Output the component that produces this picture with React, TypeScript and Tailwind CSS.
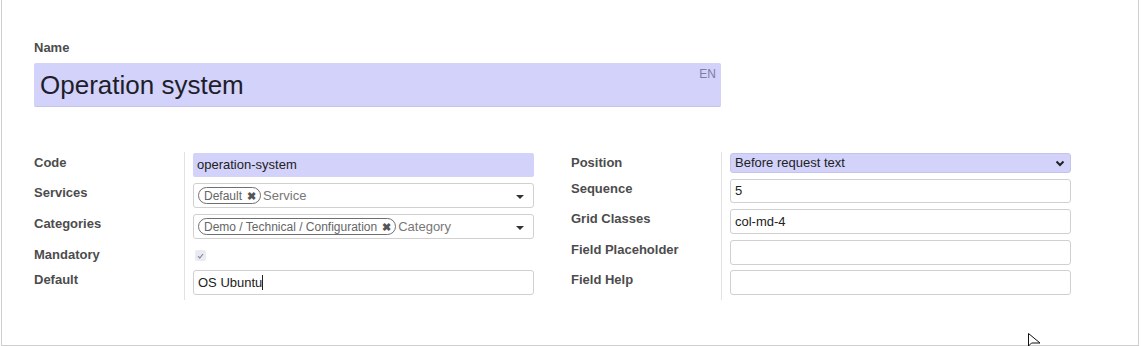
import React from "react";

const font = { fontFamily: '"Liberation Sans", Arial, sans-serif' };

const Label = ({ children, pt = "pt-[1px]" }: { children: React.ReactNode; pt?: string }) => (
  <div className={`w-[150px] shrink-0 text-[13px] leading-[18px] font-bold text-[#4c4c4c] ${pt}`}>{children}</div>
);

const Tag = ({ text }: { text: string }) => (
  <span className="inline-flex items-center h-[17px] pl-[5px] pr-[4px] rounded-full border-[1.5px] border-[#6f6f6f] text-[12px] leading-[14px] text-[#666] mr-[2px]">
    {text}
    <span className="ml-[5px] text-[11px] font-bold text-[#555]">✖</span>
  </span>
);

const Caret = () => (
  <span className="ml-auto mr-[9px] w-0 h-0 border-l-[4px] border-r-[4px] border-t-[4px] border-l-transparent border-r-transparent border-t-[#333] mt-[3px]" />
);

const TextBox = ({ value, h = "h-[25px]", mt = "mt-0", cursor }: { value?: string; h?: string; mt?: string; cursor?: boolean }) => (
  <div className={`w-[341px] ${h} ${mt} border border-[#d0d0d0] rounded-[3px] bg-white flex items-center px-[4px] text-[13px] text-[#222]`}>
    {value}
    {cursor && <span className="inline-block w-[1px] h-[15px] bg-[#222]" />}
  </div>
);

const Row = ({ h, children }: { h: string; children: React.ReactNode }) => (
  <div className={`flex ${h}`}>{children}</div>
);

const Cell = ({ children }: { children: React.ReactNode }) => (
  <div className="border-l border-[#e2e2e2] pl-[8px] flex flex-col">{children}</div>
);

export default function App() {
  return (
    <div style={font} className="w-[1141px] h-[346px] bg-white relative">
      <div className="ml-[1px] w-[1138px] h-[346px] border-l border-r border-b border-[#cfcfcf] pt-[39px] pl-[32px]">
        <div className="text-[13px] leading-[18px] font-bold text-[#4c4c4c]">Name</div>
        <div className="mt-[6px] w-[687px] h-[44px] bg-[#d2d2fa] rounded-[2px] border-b border-[#c4c4e8] relative flex items-center pl-[6px]">
          <span className="text-[26px] text-[#1e1e2a] leading-[30px] mt-[1px]">Operation system</span>
          <span className="absolute right-[5px] top-[2px] text-[12px] text-[#7d7da6]">EN</span>
        </div>

        <div className="flex mt-[45px]">
          <div className="flex flex-col">
            <Row h="h-[31px]">
              <Label pt="pt-[2px]">Code</Label>
              <Cell>
                <div className="w-[341px] h-[24px] mt-[1px] bg-[#d2d2fa] rounded-[2px] flex items-center px-[4px] text-[13px] text-[#222]">
                  operation-system
                </div>
              </Cell>
            </Row>
            <Row h="h-[31px]">
              <Label>Services</Label>
              <Cell>
                <div className="w-[341px] h-[25px] border border-[#d0d0d0] rounded-[3px] flex items-center pl-[4px] text-[13px]">
                  <Tag text="Default" />
                  <span className="text-[#777]">Service</span>
                  <Caret />
                </div>
              </Cell>
            </Row>
            <Row h="h-[31px]">
              <Label>Categories</Label>
              <Cell>
                <div className="w-[341px] h-[25px] border border-[#d0d0d0] rounded-[3px] flex items-center pl-[4px] text-[13px]">
                  <Tag text="Demo / Technical / Configuration" />
                  <span className="text-[#777]">Category</span>
                  <Caret />
                </div>
              </Cell>
            </Row>
            <Row h="h-[25px]">
              <Label>Mandatory</Label>
              <Cell>
                <div className="w-[11px] h-[11px] mt-[5px] ml-[2px] rounded-[2px] bg-[#eaeaf2] flex items-center justify-center">
                  <svg width="7" height="6" viewBox="0 0 7 6">
                    <path d="M1 3.2 L2.8 5 L6 1" fill="none" stroke="#8a8aa0" strokeWidth="1.2" />
                  </svg>
                </div>
              </Cell>
            </Row>
            <Row h="h-[30px]">
              <Label>Default</Label>
              <Cell>
                <TextBox value="OS Ubuntu" cursor />
              </Cell>
            </Row>
          </div>

          <div className="flex flex-col ml-[37px]">
            <Row h="h-[27px]">
              <Label pt="pt-[2px]">Position</Label>
              <Cell>
                <div className="w-[341px] h-[20px] mt-[1px] bg-[#d2d2fa] rounded-[3px] border border-[#c4c4e8] flex items-center px-[4px] text-[13px] text-[#222]">
                  Before request text
                  <svg className="ml-auto mr-[1px]" width="10" height="7" viewBox="0 0 10 7">
                    <path d="M1.5 1.5 L5 5 L8.5 1.5" fill="none" stroke="#222" strokeWidth="2" />
                  </svg>
                </div>
              </Cell>
            </Row>
            <Row h="h-[30px]">
              <Label>Sequence</Label>
              <Cell>
                <TextBox value="5" h="h-[24px]" />
              </Cell>
            </Row>
            <Row h="h-[31px]">
              <Label>Grid Classes</Label>
              <Cell>
                <TextBox value="col-md-4" />
              </Cell>
            </Row>
            <Row h="h-[30px]">
              <Label>Field Placeholder</Label>
              <Cell>
                <TextBox />
              </Cell>
            </Row>
            <Row h="h-[30px]">
              <Label>Field Help</Label>
              <Cell>
                <TextBox />
              </Cell>
            </Row>
          </div>
        </div>
      </div>

      <svg className="absolute left-[1028px] top-[333px]" width="14" height="13" viewBox="0 0 14 13">
        <path d="M0.5 0.5 L0.5 13 L3.5 10 L12 10 Z" fill="#fff" stroke="#111" strokeWidth="1" />
      </svg>
    </div>
  );
}
